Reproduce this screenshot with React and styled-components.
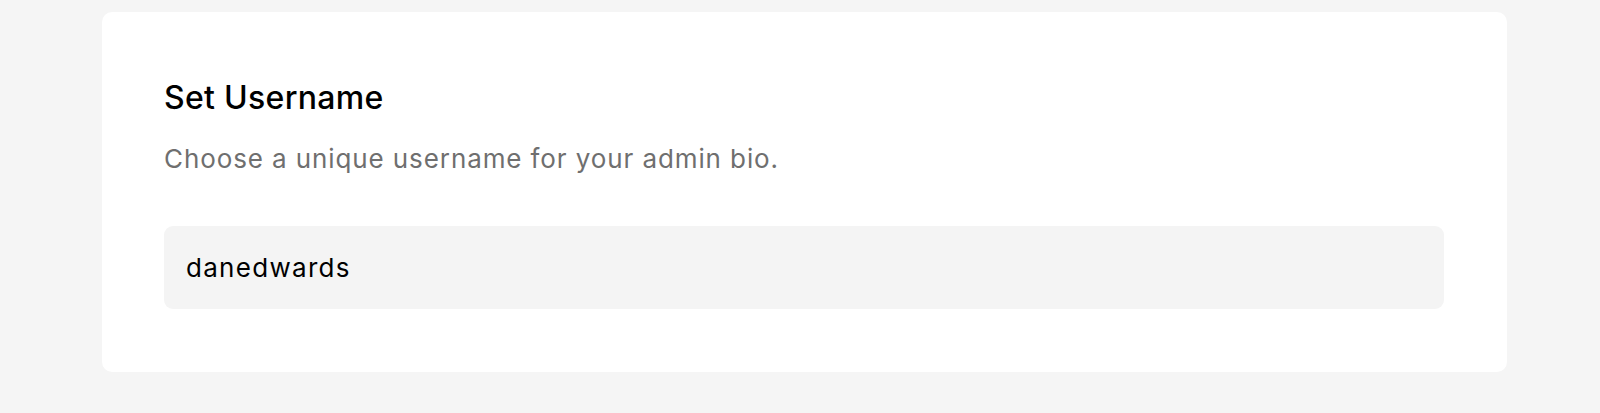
import React from "react";
import styled, { createGlobalStyle } from "styled-components";

const GlobalStyle = createGlobalStyle`
  html, body {
    margin: 0;
    padding: 0;
    background: #f5f5f5;
  }
  body {
    font-family: "Inter", "Liberation Sans", sans-serif;
    -webkit-font-smoothing: antialiased;
  }
`;

const Page = styled.main`
  min-height: 413px;
  box-sizing: border-box;
  padding: 12px 93px 42px 102px;
  background: #f5f5f5;
`;

const Card = styled.section`
  box-sizing: border-box;
  background: #ffffff;
  border-radius: 10px;
  padding: 62px 63px 63px 62px;
`;

const Title = styled.h2`
  margin: 0;
  font-size: 32px;
  line-height: 48px;
  font-weight: 500;
  letter-spacing: 0.3px;
  color: #000000;
`;

const Subtitle = styled.p`
  margin: 0;
  padding-top: 17px;
  font-size: 26px;
  line-height: 40px;
  font-weight: 400;
  letter-spacing: 0.9px;
  color: #6f6f6f;
`;

const Field = styled.input`
  display: block;
  box-sizing: border-box;
  width: 100%;
  height: 83px;
  margin-top: 47px;
  padding: 0 22px;
  border: none;
  outline: none;
  border-radius: 9px;
  background: #f4f4f4;
  font-family: inherit;
  font-size: 26px;
  letter-spacing: 1.3px;
  color: #000000;
`;

const App = () => {
  return (
    <>
      <GlobalStyle />
      <Page>
        <Card>
          <Title>Set Username</Title>
          <Subtitle>Choose a unique username for your admin bio.</Subtitle>
          <Field type="text" defaultValue="danedwards" />
        </Card>
      </Page>
    </>
  );
};

export default App;
